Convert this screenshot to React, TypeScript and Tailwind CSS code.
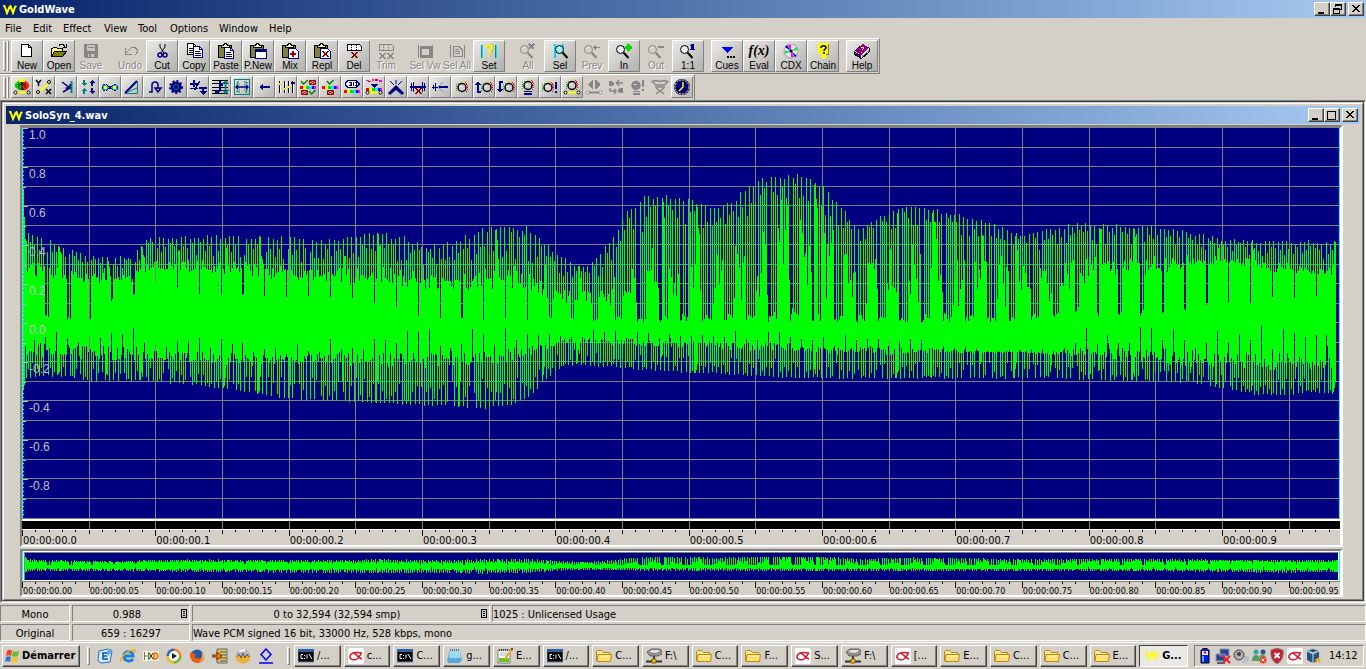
import React from 'react';

const ZERO = 195;
const PLOT_W = 1318;
const PLOT_H = 390;
const STEP = 1000 / 15;

// x, peak, body, dip above zero, then peak, body, dip below zero, and the share of dips
const ENVELOPE = [
    [0, 94, 62, 0, 56, 34, 0, 0.12],
    [20, 86, 58, 5, 54, 34, 0, 0.12],
    [40, 77, 52, 0, 54, 36, 0, 0.1],
    [65, 68, 46, 0, 58, 36, 0, 0.1],
    [85, 66, 44, 20, 58, 38, 0, 0.1],
    [108, 68, 44, 25, 59, 38, 0, 0.1],
    [125, 86, 52, 40, 59, 38, 5, 0],
    [175, 88, 50, 28, 63, 40, 12, 0],
    [225, 88, 46, 26, 70, 44, 14, 0],
    [265, 88, 40, 22, 76, 44, 12, 0],
    [300, 84, 38, 25, 79, 42, 10, 0],
    [343, 94, 38, 20, 80, 44, 6, 0],
    [380, 88, 36, 12, 82, 46, 5, 0],
    [405, 78, 32, 2, 83, 46, 5, 0],
    [430, 82, 32, 2, 84, 44, 5, 0],
    [460, 97, 32, 2, 86, 42, 4, 0],
    [485, 103, 34, 5, 84, 40, 4, 0.05],
    [505, 98, 32, 2, 76, 34, 6, 0.05],
    [525, 80, 28, 5, 54, 26, 6, 0.1],
    [540, 66, 25, 2, 44, 20, 8, 0.1],
    [555, 60, 22, 2, 42, 20, 8, 0.1],
    [570, 62, 24, 2, 44, 20, 6, 0.15],
    [590, 92, 34, 2, 45, 22, 6, 0.25],
    [606, 118, 50, 1, 46, 22, 6, 0.35],
    [620, 127, 60, 0, 48, 24, 8, 0.4],
    [640, 132, 64, 0, 49, 24, 8, 0.4],
    [660, 128, 64, 0, 50, 24, 8, 0.4],
    [688, 117, 62, 0, 51, 26, 6, 0.4],
    [715, 130, 72, 0, 53, 28, 4, 0.4],
    [740, 146, 94, 0, 54, 28, 4, 0.4],
    [765, 150, 104, 0, 55, 28, 8, 0.4],
    [785, 148, 96, 0, 55, 30, 12, 0.4],
    [805, 134, 80, 0, 56, 32, 14, 0.4],
    [835, 95, 64, 0, 56, 32, 10, 0.35],
    [860, 109, 76, 0, 56, 32, 10, 0.4],
    [885, 118, 80, 0, 56, 32, 14, 0.4],
    [930, 112, 70, 0, 56, 30, 20, 0.35],
    [970, 100, 62, 0, 56, 30, 26, 0.35],
    [1000, 88, 54, 2, 56, 30, 26, 0.3],
    [1030, 96, 58, 4, 56, 32, 24, 0.3],
    [1055, 101, 60, 8, 57, 34, 6, 0.2],
    [1085, 100, 60, 6, 58, 38, 2, 0.15],
    [1130, 98, 58, 6, 59, 40, 0, 0.1],
    [1165, 92, 58, 12, 60, 44, 0, 0.05],
    [1200, 85, 58, 18, 66, 46, 0, 0],
    [1230, 83, 56, 18, 72, 46, 0, 0],
    [1255, 83, 50, 24, 74, 48, 0, 0],
    [1285, 83, 46, 24, 70, 48, 0, 0],
    [1315, 82, 46, 28, 71, 48, 0, 0],
];

const noise = (n: number) => {
    const v = Math.sin(n * 12.9898) * 43758.5453;
    return v - Math.floor(v);
};

const envelopeAt = (x: number) => {
    let k = 0;
    while (k < ENVELOPE.length - 2 && ENVELOPE[k + 1][0] < x) k++;
    const a = ENVELOPE[k];
    const b = ENVELOPE[k + 1];
    const t = Math.min(1, Math.max(0, (x - a[0]) / (b[0] - a[0])));
    return a.map((v, i) => v + (b[i] - v) * t);
};

const upper = (x: number, peak: number, body: number, dip: number, share: number) => {
    const cycle = (x / 4.37) % 1;
    const beat = (x / 21.9) % 1;
    if (beat < 0.046) return dip + noise(x) * 4;
    if (cycle < 0.24) return peak - noise(x) * (peak - body) * 0.12;
    if (cycle > 0.45 && cycle < 0.7) return body + (peak - body) * (0.45 + noise(x * 3) * 0.4);
    if (beat < share + 0.05) return dip + noise(x) * (body - dip) * 0.15;
    const loose = Math.min(1, share / 0.35);
    const full = body + noise(x * 7) * (peak - body) * 0.35;
    return full - loose * noise(x * 11) * (full - dip) * 0.8;
};

const lower = (x: number, peak: number, body: number, dip: number) => {
    const cycle = ((x + 2) / 4.37) % 1;
    const beat = ((x + 11) / 10.95) % 1;
    if (beat < 0.092) return dip + noise(x) * (body - dip) * 0.6;
    if (cycle < 0.24) return peak - noise(x + 5) * 2;
    if (cycle > 0.45 && cycle < 0.7) return body + (peak - body) * (0.3 + noise(x * 3) * 0.6);
    return body - noise(x * 7) * (body - dip) * 0.4;
};

const columns = Array.from({ length: 1313 }, (_, i) => {
    const [, up, upBody, upDip, down, downBody, downDip, share] = envelopeAt(i);
    if (i === 0) return { x: i + 1, top: 134, bottom: 67 };
    if (i === 1) return { x: i + 1, top: 106, bottom: 62 };
    return {
        x: i + 1,
        top: upper(i, up, upBody, upDip, share),
        bottom: lower(i, down, downBody, downDip),
    };
});

const mainWave = columns.map((c) => `M${c.x + 0.5} ${Math.round(ZERO - c.top)}V${Math.round(ZERO + c.bottom)}`).join('');
const smallWave = columns
    .map((c) => `M${c.x - 0.5} ${Math.round(12.5 - Math.min(c.top, 110 + c.top / 10) / 14.5)}V${Math.round(14 + c.bottom / 13)}`)
    .join('');

const gridX = Array.from({ length: 19 }, (_, i) => Math.round((i + 1) * STEP));
const gridY = Array.from({ length: 19 }, (_, i) => Math.ceil((i + 1) * 19.5) - 1);
const ticks = Array.from({ length: 99 }, (_, i) => ({ x: Math.round((i * STEP) / 5), major: i % 5 === 0, label: i % 10 === 0 }));

const Logo: React.FC<{ className?: string }> = ({ className }) => (
    <svg className={className} viewBox="0 0 14 10" fill="none" stroke="#ffff00" strokeWidth="2">
        <path d="M0 1h1.500l2.500 7 2.500-6 1-1 2.500 7 2-6 1.500-1" />
    </svg>
);

/* ---------- toolbar drawings ---------- */

const Sheet = ({ x = 0, y = 0, c = '#000' }) => (
    <g transform={`translate(${x} ${y})`}>
        <path d="M.5 .5h6l3 3v8h-9z" fill="#fff" stroke={c} />
        <path d="M6.500 .5v3h3M2 5.500h5M2 7.500h6M2 9.500h6" stroke={c} fill="none" />
    </g>
);

const Clipboard = () => (
    <g>
        <path d="M2.500 2.500h13v12h-13z" fill="#808040" stroke="#000" />
        <path d="M5.500 4.500v-2h2l1-2h2l1 2h2v2z" fill="#ffff80" stroke="#000" />
    </g>
);

const Lens = ({ x = 0, y = 0, c = '#000', fill = '#e8e8e8' }) => (
    <g transform={`translate(${x} ${y})`} shapeRendering="auto">
        <circle cx="6.500" cy="5.500" r="4" fill={fill} stroke={c} />
        <path d="M4.500 5l2-2" stroke="#fff" fill="none" />
        <path d="M9.500 8.500l5 5.500" stroke={c} strokeWidth="2" />
    </g>
);

const Cross = ({ x = 0, y = 0, c = '#800000' }) => (
    <path transform={`translate(${x} ${y})`} d="M0 0h2v1h1v1h1v-1h1v-1h2v1h-1v1h-1v2h1v1h1v1h-2v-1h-1v-1h-1v1h-1v1h-2v-1h1v-1h1v-2h-1v-1h-1z" fill={c} />
);

const Strip = ({ bars = '#000', x = 0 }) => (
    <g transform={`translate(${x} 0)`}>
        <path d="M1.500 1.500h12l2 2v4h-14z" fill={bars === '#000' ? '#fff' : 'none'} stroke={bars} />
        <path d="M5.500 2v5M10.500 2v5" stroke={bars} strokeDasharray="1 1" />
    </g>
);

const GRAY = '#868686';

const bigIcons: Record<string, React.ReactNode> = {
    New: <path d="M4.500 1.500h7l3 3v9h-10zM11.500 1.500v3h3" fill="#fff" stroke="#000" />,
    Open: (
        <g>
            <path d="M2.500 13.500v-8h1l1-1h3l1 1h5v3" fill="#ffff80" stroke="#000" />
            <path d="M2.500 13.500l3-5h12l-4 5z" fill="#808000" stroke="#000" />
            <path d="M10 2.500l1-1h3l2 2M17.500 1v3.500h-4" stroke="#000" fill="none" />
        </g>
    ),
    Save: (
        <g>
            <path d="M3 1h14v14h-13l-1-1z" fill={GRAY} />
            <path d="M6 2h8v6h-8zM7 11h6v3h-6z" fill="#c8c5be" />
            <path d="M7 4h6v1h-6zM8 11h2v3h-2z" fill={GRAY} />
        </g>
    ),
    Undo: <path d="M5.500 5v6h6M6 10l4-4 2-1.500h3l2 2v3l-2 2.500" stroke={GRAY} fill="none" />,
    Cut: (
        <g fill="none" shapeRendering="auto">
            <path d="M8 1v3l4 6M13 1v3l-4 6" stroke="#000" />
            <circle cx="8" cy="12" r="2" stroke="#000080" strokeWidth="1.500" />
            <circle cx="13" cy="12" r="2" stroke="#000080" strokeWidth="1.500" />
        </g>
    ),
    Copy: (
        <g>
            <Sheet x={3} y={0} />
            <Sheet x={9} y={3} c="#000080" />
        </g>
    ),
    Paste: (
        <g>
            <Clipboard />
            <Sheet x={8} y={4} c="#000080" />
        </g>
    ),
    'P.New': (
        <g>
            <Clipboard />
            <path d="M7.500 6.500h11v9h-11z" fill="#fff" stroke="#000080" />
            <path d="M7 6h12v3h-12z" fill="#000080" />
        </g>
    ),
    Mix: (
        <g>
            <Clipboard />
            <path d="M8.500 5.500h7l3 3v7h-10z" fill="#fff" stroke="#000080" />
            <path d="M12 8h2v2h2v2h-2v2h-2v-2h-2v-2h2z" fill="#a00000" />
        </g>
    ),
    Repl: (
        <g>
            <Clipboard />
            <path d="M8.500 5.500h7l3 3v7h-10z" fill="#fff" stroke="#000080" />
            <Cross x={10} y={8} />
        </g>
    ),
    Del: (
        <g>
            <Strip x={2} />
            <Cross x={7} y={9} />
        </g>
    ),
    Trim: (
        <g>
            <Strip x={2} bars={GRAY} />
            <Cross x={3} y={10} c={GRAY} />
            <Cross x={11} y={10} c={GRAY} />
        </g>
    ),
    'Sel Vw': (
        <g>
            <path d="M3.500 2v13M17.500 2v13M5 3h11v11h-11z" stroke={GRAY} fill={GRAY} />
            <path d="M7 6h7v6h-7z" fill="#d4d0c8" />
        </g>
    ),
    'Sel All': (
        <g>
            <path d="M3.500 2v13M17.500 2v13" stroke={GRAY} />
            <path d="M6 3.500h6l3 3v7h-9zM8 6.500h4M8 8.500h5M8 10.500h5" stroke={GRAY} fill="none" />
        </g>
    ),
    Set: (
        <g>
            <path d="M3.500 2v13M17.500 2v13" stroke="#00e8ff" />
            <path d="M2.500 2v13M16.500 2v13" stroke="#009090" />
            <g shapeRendering="auto" strokeWidth="2" fill="none">
                <path d="M8 5c0-4 6-4 6 0 0 2-3 2-3 5M11 12v2" stroke="#808000" />
                <path d="M7.500 5c0-4 6-4 6 0 0 2-3 2-3 5M10.500 12v2" stroke="#ffff00" />
            </g>
        </g>
    ),
    All: (
        <g>
            <Lens x={0} y={1} c={GRAY} fill="none" />
            <path d="M11 1l5 5M16 1l-5 5" stroke={GRAY} strokeWidth="2" />
        </g>
    ),
    Sel: (
        <g>
            <path d="M5 1v14M13 1v10" stroke="#00d8f0" strokeWidth="2" />
            <Lens x={3} y={1} fill="#a0e8f0" />
        </g>
    ),
    Prev: (
        <g>
            <Lens x={0} y={1} c={GRAY} fill="none" />
            <path d="M11 4.500h7M13.500 2v5M12.500 3v3" stroke={GRAY} fill="none" />
        </g>
    ),
    In: (
        <g>
            <Lens x={0} y={1} />
            <path d="M13 1h3v2h2v3h-2v2h-3v-2h-2v-3h2z" fill="#00d800" />
        </g>
    ),
    Out: (
        <g>
            <Lens x={0} y={1} c={GRAY} fill="none" />
            <path d="M12 3h6v2h-6z" fill={GRAY} />
        </g>
    ),
    '1:1': (
        <g>
            <Lens x={0} y={1} />
            <path d="M13 1h3v5h1v1h-5v-1h1v-3h-1v-1h1z" fill="#000080" />
        </g>
    ),
    Cues: (
        <g>
            <path d="M5 4h11l-5 6h-1z" fill="#0000ff" />
            <path d="M10 13h2v2h-2zM13 13h2v2h-2zM16 13h2v2h-2z" fill="#000" />
        </g>
    ),
    CDX: (
        <g shapeRendering="auto">
            <circle cx="10" cy="8" r="7" fill="#e0e0e8" stroke="#a0a0a0" />
            <path d="M10 8L7 2h3zM10 8l3 6h-3z" fill="#ff00ff" />
            <path d="M10 8L4 4l2-2zM10 8l6 5-2 1z" fill="#0000c0" />
            <path d="M10 8l6-4v3zM10 8l-6 3v-3z" fill="#00e060" />
            <circle cx="10" cy="8" r="1.500" fill="#000" />
        </g>
    ),
    Chain: (
        <g>
            <path d="M5 0h11v11h-3v2h2l-4 3-4-3h2v-2h-4z" fill="#ffff00" />
            <path d="M15.500 1v10h-3" stroke="#808000" fill="none" />
            <path d="M8 5c0-3 5-3 5 0 0 1-2 1-2 3M11 9v2" stroke="#000" fill="none" strokeWidth="1.500" shapeRendering="auto" />
        </g>
    ),
    Help: (
        <g>
            <path d="M2.500 8.500l8-7 7 4v3l-8 7-7-4z" fill="#fff" stroke="#000" />
            <path d="M3 8l8-7 6 4-8 7z" fill="#900090" />
            <path d="M3 9v2l6 4v-3z" fill="#600060" />
            <path d="M9 5l2-1 1 1-2 2M9 9v1" stroke="#ffff00" fill="none" />
            <path d="M10 13.500l7-6" stroke="#808080" />
        </g>
    ),
};

const Knob = ({ x = 0, y = 0, c = '#000', off = false }) => (
    <g transform={`translate(${x} ${y})`}>
        {!off && (
            <g fill="none" strokeDasharray="1 1">
                <path d="M1.500 10v-6l3-3" stroke="#00c000" />
                <path d="M5 .5h5" stroke="#e0e000" />
                <path d="M10 1l2.500 3v5l-2 2" stroke="#ff0000" />
            </g>
        )}
        <circle cx="7" cy="6.500" r="4" fill={off ? c : '#d0d0d0'} stroke={c} strokeWidth="1.500" shapeRendering="auto" />
        <path d="M5 5h2v1h-2z" fill="#fff" />
    </g>
);

const Slider = ({ c = '#ffff00', edge = '#000' }) => (
    <g shapeRendering="auto">
        <path d="M4 12.500h10v2h-10z" fill={c} />
        <circle cx="2.500" cy="13.500" r="1.500" fill="#fff" stroke={edge} />
        <circle cx="15.500" cy="13.500" r="1.500" fill="#fff" stroke={edge} />
    </g>
);

const Rainbow = ({ y = 0 }) => (
    <g transform={`translate(0 ${y})`}>
        <path d="M1 0h3v3h-3z" fill="#ff0000" />
        <path d="M4 0h3v3h-3z" fill="#ffff00" />
        <path d="M7 0h3v3h-3z" fill="#00e000" />
        <path d="M10 0h3v3h-3z" fill="#00e8ff" />
        <path d="M13 0h2v3h-2z" fill="#0000ff" />
        <path d="M15 0h2v3h-2z" fill="#ff00ff" />
    </g>
);

const smallIcons: { name: string; art: React.ReactNode }[] = [
    {
        name: 'Doppler',
        art: (
            <g shapeRendering="auto">
                <path d="M9 1v10H6L2 8V5l3-3z" fill="#00d000" />
                <path d="M9 1l4 1 3 3v3l-3 3H9z" fill="#ff2000" />
                <path d="M6 0h6v3H6z" fill="#ffff00" />
                <circle cx="9" cy="7" r="3.500" stroke="#000" strokeDasharray="2 1" />
                <path d="M9 11V4M6.500 6.500L9 4l2.500 2.500" stroke="#000" fill="none" />
                <Slider />
            </g>
        ),
    },
    {
        name: 'Dynamics',
        art: (
            <g fill="none" shapeRendering="auto">
                <path d="M1 1l2.500 3v3M6 1L3.500 4M11 10l5 5M16 10l-5 5" stroke="#000" strokeWidth="1.500" />
                <path d="M5 12l8-7" stroke="#ffff00" strokeWidth="2" />
                <circle cx="3" cy="13" r="1.500" fill="#fff" stroke="#000" />
                <circle cx="14" cy="3" r="1.500" fill="#fff" stroke="#000" />
            </g>
        ),
    },
    {
        name: 'Echo',
        art: (
            <g fill="none" strokeWidth="1.500" shapeRendering="auto">
                <path d="M14.500 2v12" stroke="#008080" strokeWidth="2" />
                <path d="M5 3l8 6-7 4M8.500 9H13V5" stroke="#000080" />
            </g>
        ),
    },
    {
        name: 'Compress',
        art: (
            <g>
                <path d="M4 1h2v3h2l-3 3-3-3h2zM4 15h2v-3h2l-3-3-3 3h2z" fill="#008080" />
                <path d="M12 7h2v-3h2l-3-3-3 3h2zM12 9h2v3h2l-3 3-3-3h2z" fill="#000080" />
            </g>
        ),
    },
    {
        name: 'Flanger',
        art: (
            <g>
                <path d="M1 6h4l4 2 4-2h4v5h-4l-4-2-4 2h-4z" fill="#00b8c8" />
                <path d="M3 7h3v3h-3zM12 7h3v3h-3z" fill="#ffff00" />
                <path d="M8 7h2v3h-2zM1 7h1v3h-1zM16 7h1v3h-1z" fill="#000080" />
                <path d="M2 5.500h3l3 2h2l3-2h3M2 11.500h3l3-2h2l3 2h3" stroke="#000080" fill="none" strokeDasharray="2 1" />
            </g>
        ),
    },
    {
        name: 'Fade',
        art: (
            <g fill="none" shapeRendering="auto">
                <path d="M2 14.500h12.500v-12M2 14l12-5" stroke="#008080" />
                <path d="M2 14l12-12" stroke="#000080" strokeWidth="2" />
            </g>
        ),
    },
    {
        name: 'Invert',
        art: <path d="M4 13h3V6c0-4 6-4 6 0v4M10 9h6l-3 4z" stroke="#000080" strokeWidth="1.500" fill="none" shapeRendering="auto" />,
    },
    {
        name: 'Mechanize',
        art: (
            <g shapeRendering="auto">
                <circle cx="9" cy="8" r="5.500" fill="#000080" />
                <circle cx="9" cy="8" r="6" stroke="#000080" strokeWidth="2" strokeDasharray="2 2" />
                <circle cx="9" cy="8" r="2.500" stroke="#008080" fill="none" />
            </g>
        ),
    },
    {
        name: 'Offset',
        art: (
            <path d="M4 1h2v3h3v2h-3v2h-2v-2h-3v-2h3zM1 9h8v1h-8zM10 8h8v2h-8zM13 10h2v2h3l-4 4-4-4h3zM11 3l-5 9 -1-1 5-9z" fill="#000080" />
        ),
    },
    {
        name: 'Pitch',
        art: (
            <g>
                <path d="M1 1.500h16M1 4.500h16M1 8.500h16M1 11.500h16M1 14.500h16" stroke="#000" />
                <path d="M8 2h2v10l-3 2h-3v-3h4zM10 4l2 1v2h-2z" fill="#000080" />
                <path d="M14.500 2v12M11.500 5l3-3 3 3M11.500 11l3 3 3-3" stroke="#008080" fill="none" strokeWidth="1.500" shapeRendering="auto" />
            </g>
        ),
    },
    {
        name: 'Reverb',
        art: (
            <g fill="none">
                <path d="M1.500 .5h15v15h-15z" stroke="#008080" />
                <g shapeRendering="auto">
                    <path d="M4 6V3h3M11 3h3v3M14 10v3h-3M7 13H4v-3M4 3l3 3M14 3l-3 3M14 13l-3-3M4 13l3-3" stroke="#008080" strokeDasharray="2 1" />
                    <path d="M3 8h12M5 6L3 8l2 2M13 6l2 2-2 2" stroke="#000080" strokeWidth="1.500" />
                </g>
            </g>
        ),
    },
    { name: 'Reverse', art: <path d="M4 8l4-4v3h7v2h-7v3z" fill="#000080" /> },
    {
        name: 'Equalizer',
        art: (
            <g>
                <path d="M2.500 2v12M7.500 2v12M11.500 2v12M15.500 2v12" stroke="#000" />
                <path d="M3.500 2v12M8.500 2v12M12.500 2v12M16.500 2v12" stroke="#fff" />
                <path d="M1 4h4v2h-4zM6 9h4v2h-4zM10 7h4v2h-4z" fill="#e0e060" />
                <path d="M14 3h4v2h-4z" fill="#000080" />
            </g>
        ),
    },
    {
        name: 'Parametric',
        art: (
            <g fill="none" shapeRendering="auto">
                <path d="M2 2l2.500 3L9 1M10 12l2.500 3 4-4" stroke="#008000" strokeWidth="1.500" />
                <path d="M10.500 1.500h6v4h-6zM2.500 11.500h6v4h-6zM11 2l5 3M16 2l-5 3M3 12l5 3M8 12l-5 3" stroke="#a00000" />
                <Rainbow y={7} />
            </g>
        ),
    },
    {
        name: 'Band',
        art: (
            <g fill="none" shapeRendering="auto">
                <path d="M6 2l2.500 3 4-4" stroke="#008000" strokeWidth="1.500" />
                <path d="M6.500 11.500h6v4h-6zM7 12l5 3M12 12l-5 3" stroke="#a00000" />
                <Rainbow y={7} />
            </g>
        ),
    },
    {
        name: 'Noise gate',
        art: (
            <g>
                <path d="M5 1.500h8l3 3v1l-3 3h-8l-3-3v-1z" fill="#fff" stroke="#000080" />
                <path d="M6 3.500h2v3h-2M7 5h1M10.500 3v4M12 3h1v3h-1" stroke="#000080" fill="none" />
                <Rainbow y={11} />
            </g>
        ),
    },
    {
        name: 'Spectrum',
        art: (
            <g>
                <path d="M1 1h3v1h-3zM7 0h2v2h-2zM14 1h3v2h-3z" fill="#ff00ff" />
                <path d="M3 2h3v1h-3zM10 0h3v2h-3z" fill="#ff0000" />
                <path d="M5 5h8l-4 4z" fill="#000080" />
                <Rainbow y={9} />
                <Slider />
            </g>
        ),
    },
    {
        name: 'Smoother',
        art: (
            <g shapeRendering="auto">
                <path d="M9 6l8 8-2 2-6-5-6 5-2-2z" fill="#000080" />
                <path d="M9 1v4M3 2l4 4M15 2l-4 4" stroke="#000080" />
            </g>
        ),
    },
    {
        name: 'Click filter',
        art: (
            <g>
                <path d="M2 4h1v8h-1zM4 3h1v10h-1zM13 3h1v10h-1zM15 4h1v8h-1zM1 7h16v2h-16z" fill="#000080" />
                <Cross x={6} y={9} />
            </g>
        ),
    },
    {
        name: 'Silence',
        art: (
            <g stroke="#000080" fill="none">
                <path d="M1 8h8M2.500 6v4M4.500 4v8" />
                <path d="M8 8h9" strokeWidth="2" />
                <path d="M12 3L7 8l5 5" stroke="#8088b0" shapeRendering="auto" />
            </g>
        ),
    },
    { name: 'Volume', art: <Knob x={2} y={2} /> },
    {
        name: 'Fade in',
        art: (
            <g>
                <Knob x={5} y={2} />
                <path d="M2 14V6h-2l3-4 3 4h-2v6h2v2z" fill="#000080" />
            </g>
        ),
    },
    {
        name: 'Fade out',
        art: (
            <g>
                <Knob x={5} y={2} />
                <path d="M6 2h-4v8h-2l3 4 3-4h-2v-6h2z" fill="#000080" />
            </g>
        ),
    },
    {
        name: 'Match volume',
        art: (
            <g>
                <Knob x={2} />
                <path d="M5 12h8v1h-8zM5 14h8v2h-8z" fill="#000080" />
            </g>
        ),
    },
    {
        name: 'Maximize volume',
        art: (
            <g>
                <Knob y={2} />
                <path d="M14 3h2v7h-2zM14 12h2v2h-2z" fill="#000080" />
            </g>
        ),
    },
    {
        name: 'Shape volume',
        art: (
            <g>
                <Knob x={2} />
                <Slider />
            </g>
        ),
    },
    {
        name: 'Pan',
        art: (
            <g>
                <path d="M8 1v9h-1l-4-4v-1l4-4zM10 1v9h1l4-4v-1l-4-4z" fill={GRAY} />
                <Slider c={GRAY} edge={GRAY} />
            </g>
        ),
    },
    {
        name: 'Swap channels',
        art: (
            <g shapeRendering="auto">
                <path d="M2 2h3c3 2 3 4 0 5H2zM16 9h-3c-3 2-3 4 0 5h3z" fill={GRAY} />
                <path d="M16 4h-6M12 1L9.500 4 12 7M3 9v3h6M7 10l2 2-2 3" stroke={GRAY} strokeWidth="1.500" />
            </g>
        ),
    },
    {
        name: 'Channel mixer',
        art: (
            <g>
                <Knob c={GRAY} off />
                <path d="M13 1h2v7h-2zM13 10h2v2h-2zM4 12h7v1h-7zM4 14h7v2h-7z" fill={GRAY} />
            </g>
        ),
    },
    {
        name: 'Reduce vocals',
        art: (
            <g stroke={GRAY} fill="none" strokeWidth="1.500" shapeRendering="auto">
                <path d="M1 2.500l4-1 4 1 4-1 4 1-4 3.500H5z" />
                <path d="M4 8h10M5 9l8 6M13 9l-8 6" />
            </g>
        ),
    },
    {
        name: 'Playback rate',
        art: (
            <g shapeRendering="auto">
                <circle cx="9" cy="8" r="7" fill="#000080" stroke="#000080" strokeWidth="2" />
                <circle cx="9" cy="8" r="7" stroke="#ffff00" strokeDasharray="2 1" />
                <path d="M10 3v5l-4 4" stroke="#ffff00" strokeWidth="1.500" fill="none" />
            </g>
        ),
    },
];

const toolGroups = [
    ['New', 'Open', 'Save'],
    ['Undo', 'Cut', 'Copy', 'Paste', 'P.New', 'Mix', 'Repl', 'Del', 'Trim'],
    ['Sel Vw', 'Sel All', 'Set'],
    ['All', 'Sel', 'Prev', 'In', 'Out', '1:1'],
    ['Cues', 'Eval', 'CDX', 'Chain'],
    ['Help'],
];
const disabledTools = ['Save', 'Undo', 'Trim', 'Sel Vw', 'Sel All', 'All', 'Prev', 'Out'];

const Grip: React.FC = () => (
    <div className="flex gap-px pl-[3px] pr-[2px] py-[2px]">
        <div className="w-[3px] border border-t-white border-l-white border-r-[#808080] border-b-[#808080]" />
        <div className="w-[2px] border-l border-l-white border-r border-r-[#808080]" />
    </div>
);

const ToolButton: React.FC<{ name: string }> = ({ name }) => {
    const off = disabledTools.includes(name);
    return (
        <button
            disabled={off}
            className={`flex h-8 w-8 flex-col items-center border pt-[2px] font-['Liberation_Sans',sans-serif] text-[10px] leading-[13px] whitespace-nowrap ${
                off
                    ? 'border-transparent text-[#868686] [text-shadow:1px_1px_#fff]'
                    : 'border-t-white border-l-white border-r-[#808080] border-b-[#808080] bg-linear-to-br from-[#eceae6] to-[#b2b0ac] text-black'
            }`}
        >
            {name === 'Eval' ? (
                <span className="h-4 font-['Liberation_Serif',serif] text-[14px] leading-4 font-bold italic">f(x)</span>
            ) : (
                <svg className="h-4 w-5 shrink-0" viewBox="0 0 20 16" fill="none" shapeRendering="crispEdges">
                    {bigIcons[name]}
                </svg>
            )}
            <span>{name}</span>
        </button>
    );
};

const WindowButtons: React.FC<{ restore?: boolean }> = ({ restore }) => {
    const style =
        'flex h-[14px] w-4 items-center justify-center border border-t-white border-l-white border-r-[#404040] border-b-[#404040] bg-[#d4d0c8] shadow-[inset_-1px_-1px_#808080]';
    return (
        <div className="flex">
            <button aria-label="Minimize" className={style}>
                <svg className="h-3 w-3" viewBox="0 0 12 12"><path d="M2 9h6v2h-6z" /></svg>
            </button>
            <button aria-label={restore ? 'Restore' : 'Maximize'} className={style}>
                <svg className="h-3 w-3" viewBox="0 0 12 12" fill="none" stroke="#000" shapeRendering="crispEdges">
                    {restore ? <path d="M3.500 4v-2.500h6v5h-2M3 2h7M1.500 5.500h6v5h-6zM1 6h7" /> : <path d="M1.500 2.500h8v8h-8zM1 2h9" />}
                </svg>
            </button>
            <button aria-label="Close" className={`${style} ml-[2px]`}>
                <svg className="h-3 w-3" viewBox="0 0 12 12" shapeRendering="crispEdges">
                    <path d="M2 2h2v1h1v1h2v-1h1v-1h2v1h-1v1h-1v1h-1v1h1v1h1v1h1v1h-2v-1h-1v-1h-2v1h-1v1h-2v-1h1v-1h1v-1h1v-1h-1v-1h-1v-1h-1z" />
                </svg>
            </button>
        </div>
    );
};

const Ruler: React.FC<{ labels: string[]; span: number; small?: boolean }> = ({ labels, span, small }) => (
    <div className={small ? 'h-[13px]' : 'h-[15px]'}>
        <svg className="block h-[6px] w-full" viewBox="0 0 1318 6" preserveAspectRatio="none" shapeRendering="crispEdges">
            {ticks.map((t) => (
                <path key={t.x} d={`M${t.x + 0.5} 0V${t.label || (small && t.major) ? 6 : t.major ? 4 : 2}`} stroke="#000" />
            ))}
        </svg>
        <div className="-mt-px flex">
            {labels.map((l) => (
                <span
                    key={l}
                    className={`shrink-0 pl-px whitespace-nowrap last:shrink ${small ? 'text-[9px] leading-[8px]' : 'text-[11px] leading-[11px]'}`}
                    style={{ width: `${(100 * span) / PLOT_W}%` }}
                >
                    {l}
                </span>
            ))}
        </div>
    </div>
);

const mainLabels = Array.from({ length: 10 }, (_, i) => `00:00:00.${i}`);
const overviewLabels = Array.from({ length: 20 }, (_, i) => `00:00:00.${String(i * 5).padStart(2, '0')}`);
const levels = ['1.0', '0.8', '0.6', '0.4', '0.2', '0.0', '-0.2', '-0.4', '-0.6', '-0.8'];

const WaveWindow: React.FC = () => (
    <section className="flex min-h-0 flex-1 flex-col border border-t-[#d4d0c8] border-l-[#d4d0c8] border-r-[#404040] border-b-[#404040]">
        <div className="flex min-h-0 flex-1 flex-col border border-t-white border-l-white border-r-[#808080] border-b-[#808080] p-[2px]">
            <header className="flex h-[18px] shrink-0 items-center justify-between bg-linear-to-r from-[#0a246a] to-[#a6caf0] pr-[2px] pl-[3px]">
                <h2 className="flex items-center gap-[2px] pt-px text-[11px] font-bold text-white">
                    <Logo className="h-[10px] w-[14px]" />
                    SoloSyn_4.wav
                </h2>
                <WindowButtons />
            </header>
            <div className="mt-px mr-[17px] ml-[14px] flex min-h-0 flex-1 flex-col border-t-[3px] border-r-[3px] border-b-2 border-l-2 border-t-[#808080] border-r-white border-b-white border-l-[#808080]">
                <div className="relative min-h-0 flex-1 bg-[#000080]">
                    <svg className="block h-full w-full" viewBox={`0 0 ${PLOT_W} ${PLOT_H}`} preserveAspectRatio="none" shapeRendering="crispEdges">
                        {gridX.map((x) => <path key={x} d={`M${x + 0.5} 0V390`} stroke="#808080" />)}
                        {gridY.map((y) => <path key={y} d={`M0 ${y + 0.5}H1317`} stroke="#808080" />)}
                        <path d={mainWave} stroke="#00ff00" />
                        {Array.from({ length: 100 }, (_, i) => (
                            <path key={i} d={`M1 ${Math.round(i * 3.9) + 0.5}H${i % 10 === 0 ? 6 : i % 5 === 0 ? 4 : 2}`} stroke="#c0c0c0" />
                        ))}
                        <path d="M.5 0V390M1317.500 0V390" stroke="#00ffff" />
                    </svg>
                    <div className="absolute inset-y-0 left-[7px] flex flex-col font-['Liberation_Sans',sans-serif] text-[12px] leading-[14px] text-[#c0c0c0]">
                        {levels.map((l) => <span key={l} className="flex-1">{l}</span>)}
                    </div>
                </div>
                <div className="border-t border-t-[#808080] border-b border-b-white">
                    <svg className="block h-[10px] w-full border-t-2 border-t-white bg-black" viewBox="0 0 1318 8" preserveAspectRatio="none" shapeRendering="crispEdges">
                        {gridX.map((x) => <path key={x} d={`M${x + 0.5} 0V8`} stroke="#808080" />)}
                    </svg>
                </div>
                <Ruler labels={mainLabels} span={2 * STEP} />
            </div>
            <div className="mt-[2px] mr-[17px] ml-[14px] border-t-2 border-r-[3px] border-b-2 border-l-2 border-t-[#808080] border-r-white border-b-white border-l-[#808080]">
                <div className="border-r border-l border-[#00ffff] border-b border-b-[#808080]">
                    <div className="border border-white">
                        <svg className="block h-[28px] w-full border-t border-l border-[#808080] bg-[#000080]" viewBox="0 0 1313 27" preserveAspectRatio="none" shapeRendering="crispEdges">
                            <path d={smallWave} stroke="#00ff00" />
                        </svg>
                    </div>
                </div>
                <Ruler labels={overviewLabels} span={STEP} small />
            </div>
        </div>
    </section>
);

const StatusCell: React.FC<{ className: string; children: React.ReactNode; list?: boolean }> = ({ className, children, list }) => (
    <div className={`flex h-[17px] items-center border border-t-[#808080] border-l-[#808080] border-r-white border-b-white ${className}`}>
        <span className="flex-1 pt-[2px] whitespace-nowrap">{children}</span>
        {list && (
            <svg className="mr-[2px] h-[9px] w-[6px]" viewBox="0 0 6 9" fill="none" stroke="#000" shapeRendering="crispEdges">
                <path d="M.5 .5h5v8h-5zM2 2.500h2M2 4.500h2M2 6.500h2" />
            </svg>
        )}
    </div>
);

const StatusBar: React.FC = () => (
    <footer className="flex flex-col gap-[2px] pt-[2px] pb-px">
        <div className="flex gap-[2px]">
            <StatusCell className="w-[70px] text-center">Mono</StatusCell>
            <StatusCell className="w-[118px] text-center" list>0.988</StatusCell>
            <StatusCell className="w-[298px] text-center" list>0 to 32,594 (32,594 smp)</StatusCell>
            <StatusCell className="flex-1">1025 : Unlicensed Usage</StatusCell>
        </div>
        <div className="flex gap-[2px]">
            <StatusCell className="w-[70px] text-center">Original</StatusCell>
            <StatusCell className="w-[118px] text-center">659 : 16297</StatusCell>
            <StatusCell className="flex-1">Wave PCM signed 16 bit, 33000 Hz, 528 kbps, mono</StatusCell>
        </div>
    </footer>
);

/* ---------- task bar ---------- */

const taskArt: Record<string, React.ReactNode> = {
    cmd: (
        <g>
            <path d="M0 2h16v12h-16z" fill="#000" stroke="#6080a8" />
            <path d="M0 1h16v3h-16z" fill="#3060a8" />
            <path d="M5 6.500h-2v4h2M6.500 7v1M6.500 10v1M9 6.500v4M11 6l3 5" stroke="#fff" fill="none" />
        </g>
    ),
    fish: (
        <g>
            <rect x="0" y="0" width="16" height="16" rx="2" fill="#fff" />
            <path d="M14 5C8 4 3 5 2 8s4 5 7 3 3-5 5-6M14 11C10 10 8 5 5 5" stroke="#d81828" strokeWidth="1.500" fill="none" />
        </g>
    ),
    note: (
        <g>
            <path d="M3 2h10l2 10-3 3H1L0 12z" fill="#58a8d8" />
            <path d="M3 2h10l1 8H2z" fill="#a0d8f0" />
            <path d="M3 2h10" stroke="#607080" strokeDasharray="1 1" strokeWidth="2" />
        </g>
    ),
    edit: (
        <g>
            <path d="M1 2h12v13H1z" fill="#fff" stroke="#708070" />
            <path d="M2 10h10v4H2z" fill="#70c020" />
            <path d="M3 5h8M3 7h8" stroke="#b0b0b0" />
            <path d="M2 2h10" stroke="#404040" strokeWidth="2" strokeDasharray="1 1" />
            <path d="M15 1l-7 10" stroke="#f0a820" strokeWidth="2" />
            <path d="M15.500 0l-1 2" stroke="#a02020" strokeWidth="2" />
        </g>
    ),
    folder: (
        <g>
            <path d="M.5 13V3.500l1-1h4l2 2h6v2" fill="#ffe890" stroke="#b88818" />
            <path d="M1 13.500l1-7h13.500l-1 7z" fill="#ffe070" stroke="#b88818" />
            <path d="M3 8h11" stroke="#fff8c8" />
        </g>
    ),
    drive: (
        <g>
            <path d="M1 4l4-3h9l2 2v3l-4 2H4z" fill="#909090" stroke="#606060" />
            <path d="M3 4l3-2h7l1 1-4 2z" fill="#e0e0e0" />
            <path d="M8 8v3" stroke="#404040" strokeWidth="2" />
            <path d="M0 13.500h16" stroke="#303030" strokeWidth="2" />
            <path d="M6 11h4v4H6z" fill="#f0c020" stroke="#806000" />
        </g>
    ),
};

const tasks = [
    ['cmd', '/...'], ['fish', 'c...'], ['cmd', 'C...'], ['note', 'g...'], ['edit', 'E...'], ['cmd', '/...'],
    ['folder', 'C...'], ['drive', 'F:\\'], ['folder', 'C...'], ['folder', 'F...'], ['fish', 'S...'], ['drive', 'F:\\'],
    ['fish', '[...'], ['folder', 'E...'], ['folder', 'C...'], ['folder', 'C...'], ['folder', 'E...'], ['wave', 'G...'],
];

const quickLaunch: { name: string; art: React.ReactNode }[] = [
    {
        name: 'Outlook Express',
        art: (
            <g>
                <path d="M2 3l9-2 4 2-2 11-9 1-3-2z" fill="#d8ecff" stroke="#2070c0" />
                <path d="M11 5H6v6h5M6 8h4" stroke="#0050b0" strokeWidth="1.500" fill="none" />
                <path d="M10 3l5-2-1 4-3 3" fill="#60a8e8" />
            </g>
        ),
    },
    {
        name: 'Internet Explorer',
        art: (
            <g fill="none">
                <path d="M4 8h9c0-6-9-6-9 0s7 6 9 3" stroke="#1880e0" strokeWidth="3" />
                <path d="M1 14C-1 10 10 0 15 2c1 1 0 2-1 3" stroke="#f0b020" strokeWidth="1.500" />
            </g>
        ),
    },
    {
        name: 'HxD',
        art: (
            <g fill="none">
                <path d="M0 3h16v10H0z" fill="#f8f4e0" />
                <path d="M1.500 4v8M5.500 4v8M2 8h4" stroke="#608050" />
                <path d="M6 5l4 6M10 5l-4 6" stroke="#202020" />
                <path d="M11 5v6c5 1 5-7 0-6" stroke="#f08010" strokeWidth="2" />
            </g>
        ),
    },
    {
        name: 'Media Player',
        art: (
            <g>
                <circle cx="8" cy="8" r="7.500" fill="#f08020" />
                <path d="M8 8V.5A7.500 7.500 0 0 0 .5 8z" fill="#2868c8" />
                <path d="M8 8v7.500A7.500 7.500 0 0 0 15.500 8z" fill="#70b830" />
                <path d="M8 8H.5A7.500 7.500 0 0 0 8 15.500z" fill="#e8c020" />
                <circle cx="8" cy="8" r="5" fill="#fff" />
                <path d="M6 5l5 3-5 3z" fill="#101840" />
            </g>
        ),
    },
    {
        name: 'Firefox',
        art: (
            <g>
                <circle cx="8" cy="8" r="6.500" fill="#2858a8" />
                <path d="M1 4c-1 7 3 11 8 11 4 0 7-4 6-9-1 5-4 5-6 4-3 1-4-2-2-4-2 0-4-1-6-2z" fill="#e86010" />
                <path d="M14 4c2 4 0 9-4 10 2-2 3-4 3-7z" fill="#f8c030" />
            </g>
        ),
    },
    {
        name: 'Converter',
        art: (
            <g>
                <path d="M5 1h10v14H5z" fill="#f8c030" stroke="#4070a0" />
                <path d="M8 4h6M8 7h6M8 10h6M8 13h6" stroke="#2060b0" />
                <path d="M0 7h5V4l5 4-5 4V9H0z" fill="#f07818" stroke="#703000" />
            </g>
        ),
    },
    {
        name: 'Editor',
        art: (
            <g>
                <circle cx="8" cy="8" r="7.500" fill="#b8b8b8" />
                <path d="M.5 8a7.500 7.500 0 0 0 15 0z" fill="#f0b030" />
                <path d="M2 9l2-3 2 4 2-5 2 5 2-4 2 3" stroke="#585858" fill="none" />
                <path d="M4 3l6-1" stroke="#fff" strokeWidth="2" />
            </g>
        ),
    },
    {
        name: 'Diagram',
        art: <path d="M8 1l5 5.500L8 12 3 6.500zM1 15h14" stroke="#0000ff" strokeWidth="1.500" fill="none" />,
    },
];

const trayIcons: { name: string; art: React.ReactNode }[] = [
    {
        name: 'Battery',
        art: (
            <g>
                <path d="M6 0h4v2h2v13H4V2h2z" fill="#0020e0" stroke="#000" />
                <path d="M5 3h6v4H5z" fill="#e8e8ff" />
                <path d="M8 3v3M6.500 4.500h3" stroke="#e00000" />
                <path d="M6 8v6" stroke="#60a0ff" strokeWidth="2" />
            </g>
        ),
    },
    {
        name: 'Network',
        art: (
            <g>
                <path d="M5 1h9v7H5zM1 6h9v7H1z" fill="#304088" stroke="#9098c0" />
                <path d="M2 15h8" stroke="#606060" strokeWidth="2" />
                <path d="M8 8l7 7M15 8l-7 7" stroke="#f02020" strokeWidth="2" />
            </g>
        ),
    },
    {
        name: 'Volume',
        art: (
            <g fill="none">
                <circle cx="6" cy="7" r="5" fill="#b0b0b0" stroke="#404040" />
                <circle cx="6" cy="6" r="2" fill="#404040" />
                <path d="M9 14c3-1 4-3 4-6M12 15c3-2 3-4 3-6" stroke="#90a0d0" />
            </g>
        ),
    },
    {
        name: 'Messenger',
        art: (
            <g>
                <circle cx="5" cy="4" r="2.500" fill="#40a0a0" />
                <circle cx="12" cy="4" r="2.500" fill="#305090" />
                <path d="M1 13c0-8 8-8 8 0zM8 9c2-4 7-3 7 2z" fill="#50a060" />
                <circle cx="12" cy="12" r="3.500" fill="#f04020" />
                <path d="M10.500 10.500l3 3M13.500 10.500l-3 3" stroke="#fff" />
            </g>
        ),
    },
    {
        name: 'Security',
        art: (
            <g>
                <path d="M8 0l6 2c1 6-1 11-6 14C3 13 1 8 2 2z" fill="#c82030" stroke="#808890" />
                <path d="M5.500 5l5 5M10.500 5l-5 5" stroke="#fff" strokeWidth="2" />
            </g>
        ),
    },
    { name: 'Antivirus', art: taskArt.fish },
    {
        name: 'VirtualBox',
        art: (
            <g>
                <path d="M2 3l6-2 6 2v9l-6 3-6-3z" fill="#285078" />
                <path d="M2 3l6 3 6-3M8 6v9M4 3l4 2 4-2" stroke="#c8e0f0" fill="none" />
                <path d="M13 9l1 2h2l-1 2 1 2-3-1-2 1v-2l-1-2h2z" fill="#f0b020" />
            </g>
        ),
    },
];

const Art: React.FC<{ children: React.ReactNode }> = ({ children }) => (
    <svg className="h-4 w-4 shrink-0" viewBox="0 0 16 16" fill="none">{children}</svg>
);

const TaskBar: React.FC = () => {
    const raised =
        'border border-t-white border-l-white border-r-[#404040] border-b-[#404040] shadow-[inset_-1px_-1px_#808080]';
    return (
        <nav className="flex h-[27px] shrink-0 items-center border-t border-t-white pr-[2px] pl-[2px]">
            <button className={`flex h-[22px] w-[78px] items-center gap-px pl-[2px] font-bold ${raised}`}>
                <Art>
                    <path d="M2 3c2-2 4-1 5 0L6 8C4 7 3 7 1 8z" fill="#e84820" />
                    <path d="M8 3c2 1 4 1 6 0l-1 5c-2 1-4 1-6 0z" fill="#70b830" />
                    <path d="M1 9c2-1 4-1 5 0l-1 5c-2-1-3-1-5 0z" fill="#3870d8" />
                    <path d="M7 9c2 1 4 1 6 0l-1 5c-2 1-4 1-6 0z" fill="#f8c020" />
                </Art>
                Démarrer
            </button>
            <div className="mr-[7px] ml-[7px] h-[18px] w-[3px] border border-t-white border-l-white border-r-[#808080] border-b-[#808080]" />
            <div className="flex w-[190px] gap-[7px]">
                {quickLaunch.map((q) => (
                    <button key={q.name} aria-label={q.name}><Art>{q.art}</Art></button>
                ))}
            </div>
            <div className="mr-1 h-[18px] w-[3px] border border-t-white border-l-white border-r-[#808080] border-b-[#808080]" />
            <div className="flex flex-1 gap-[3px]">
                {tasks.map(([icon, label], i) =>
                    icon === 'wave' ? (
                        <button
                            key={i}
                            className="flex h-[22px] min-w-0 flex-1 items-center gap-[3px] border border-t-[#404040] border-l-[#404040] border-r-white border-b-white bg-[#ebe9e5] pl-[5px] font-bold"
                        >
                            <Logo className="h-[10px] w-[14px] shrink-0" />
                            {label}
                        </button>
                    ) : (
                        <button key={i} className={`flex h-[22px] min-w-0 flex-1 items-center gap-[3px] pl-[3px] ${raised}`}>
                            <Art>{taskArt[icon]}</Art>
                            {label}
                        </button>
                    ),
                )}
            </div>
            <div className="ml-[6px] flex h-[22px] w-[170px] items-center gap-[2px] border border-t-[#808080] border-l-[#808080] border-r-white border-b-white pl-[2px]">
                {trayIcons.map((t) => (
                    <button key={t.name} aria-label={t.name}><Art>{t.art}</Art></button>
                ))}
                <span className="ml-[6px] text-[11px]">14:12</span>
            </div>
        </nav>
    );
};

const menus = [
    { name: 'File', width: 'w-7' },
    { name: 'Edit', width: 'w-[30px]' },
    { name: 'Effect', width: 'w-[41px]' },
    { name: 'View', width: 'w-[34px]' },
    { name: 'Tool', width: 'w-8' },
    { name: 'Options', width: 'w-[49px]' },
    { name: 'Window', width: 'w-[50px]' },
    { name: 'Help', width: 'w-8' },
];

const App: React.FC = () => {
    return (
        <div className="flex h-screen flex-col overflow-hidden bg-[#d4d0c8] font-['DejaVu_Sans_Condensed','Noto_Sans',sans-serif] text-[11px] leading-[14px] text-black">
            <header className="flex h-[18px] shrink-0 items-center justify-between bg-linear-to-r from-[#0a246a] to-[#a6caf0] pr-[2px] pl-[3px]">
                <h1 className="flex items-center gap-[2px] pt-px font-bold text-white">
                    <Logo className="h-[10px] w-[14px]" />
                    GoldWave
                </h1>
                <WindowButtons restore />
            </header>
            <nav className="flex h-5 shrink-0 items-center pt-px pl-[5px]">
                {menus.map((m) => (
                    <button key={m.name} className={`text-left ${m.width}`}>{m.name}</button>
                ))}
            </nav>
            <div className="flex h-9 shrink-0 self-start border-t border-t-white border-r border-r-[#808080] border-b border-b-[#808080]">
                <Grip />
                <div className="flex gap-[7px] py-px pr-px">
                    {toolGroups.map((group) => (
                        <div key={group[0]} className="flex">
                            {group.map((name) => <ToolButton key={name} name={name} />)}
                        </div>
                    ))}
                </div>
            </div>
            <div className="flex h-[26px] shrink-0 self-start border-t border-t-white border-r border-r-[#808080]">
                <Grip />
                <div className="flex pt-px pr-px">
                    {smallIcons.map((s, i) => {
                        const off = i >= 26 && i <= 29;
                        return (
                            <button
                                key={s.name}
                                aria-label={s.name}
                                disabled={off}
                                className={`flex h-[22px] w-[22px] items-center justify-center border ${
                                    off
                                        ? 'border-transparent'
                                        : 'border-t-white border-l-white border-r-[#808080] border-b-[#808080] bg-linear-to-br from-[#eceae6] to-[#b8b6b2]'
                                }`}
                            >
                                <svg className="h-4 w-[18px] shrink-0" viewBox="0 0 18 16" fill="none" shapeRendering="crispEdges">
                                    {s.art}
                                </svg>
                            </button>
                        );
                    })}
                </div>
            </div>
            <main className="flex min-h-0 flex-1 flex-col border border-t-[#808080] border-l-[#808080] border-r-white border-b-white">
                <div className="flex min-h-0 flex-1 flex-col border border-t-[#404040] border-l-[#404040] border-r-[#d4d0c8] border-b-[#d4d0c8]">
                    <WaveWindow />
                </div>
            </main>
            <StatusBar />
            <TaskBar />
        </div>
    );
};

export default App;
